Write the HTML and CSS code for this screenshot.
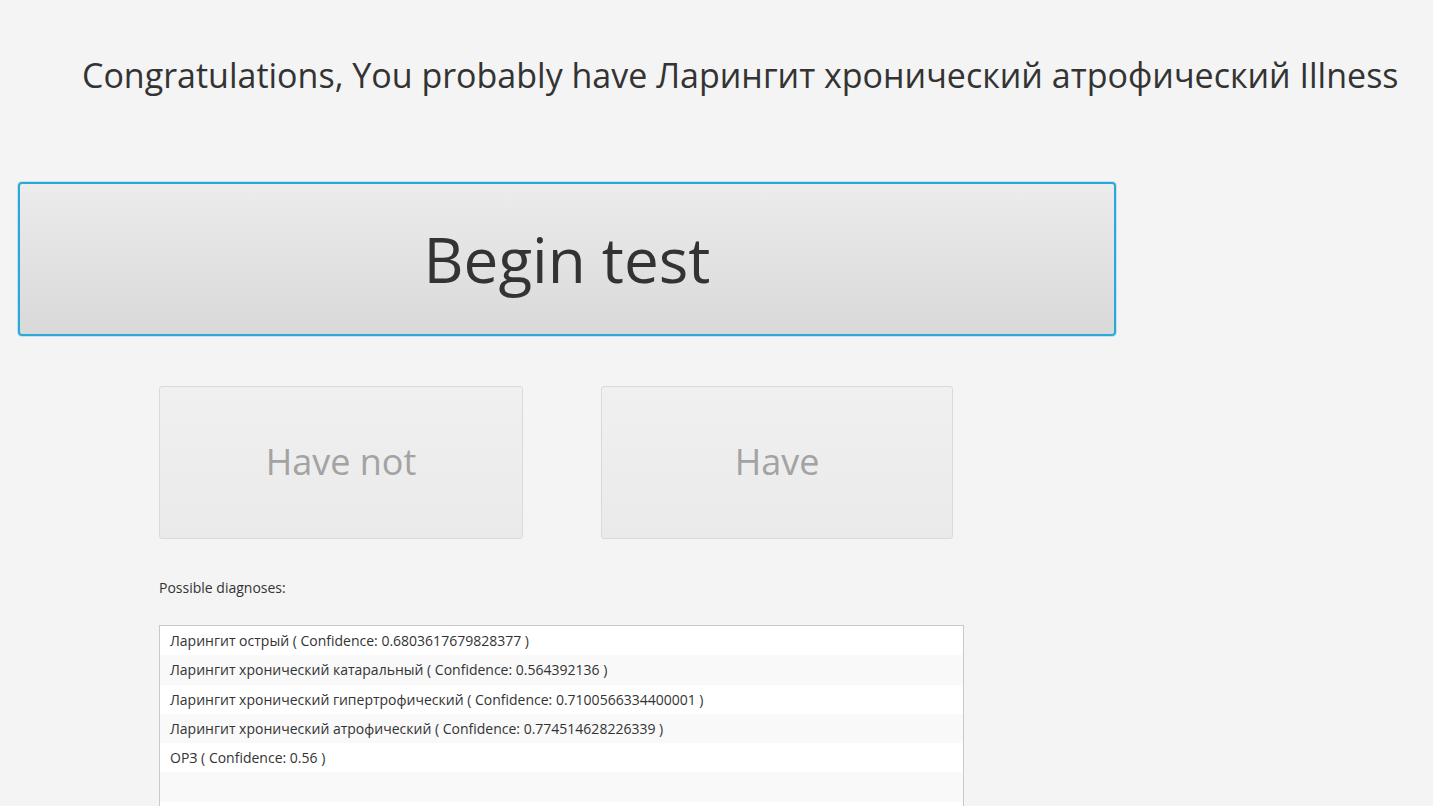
FILE: index.html
```html
<!DOCTYPE html>
<html>
<head>
<meta charset="utf-8">
<link rel="stylesheet" href="styles.css">
</head>
<body>
<div class="app">
  <h1 class="title">Congratulations, You probably have Ларингит хронический атрофический Illness</h1>
  <button class="begin">Begin test</button>
  <div class="answers">
    <button class="answer not" disabled>Have not</button>
    <button class="answer yes" disabled>Have</button>
  </div>
  <div class="label">Possible diagnoses:</div>
  <ul class="list">
    <li>Ларингит острый ( Confidence: 0.6803617679828377 )</li>
    <li>Ларингит хронический катаральный ( Confidence: 0.564392136 )</li>
    <li>Ларингит хронический гипертрофический ( Confidence: 0.7100566334400001 )</li>
    <li>Ларингит хронический атрофический ( Confidence: 0.774514628226339 )</li>
    <li>ОРЗ ( Confidence: 0.56 )</li>
    <li></li>
    <li></li>
  </ul>
</div>
</body>
</html>
```

FILE: styles.css
```css
html, body {
  margin: 0;
  padding: 0;
  background: #f4f4f4;
  overflow: hidden;
}
body {
  width: 1433px;
  height: 806px;
  font-family: "Open Sans", "Noto Sans", sans-serif;
  color: #333333;
}
.app {
  display: flex;
  flex-direction: column;
  align-items: flex-start;
}
.title {
  margin: 50px 0 0 82px;
  font-weight: 400;
  font-size: 34px;
  line-height: 50px;
  color: #333;
  white-space: nowrap;
}
.begin {
  margin: 82px 0 0 18px;
  width: 1098px;
  height: 154px;
  border: 2px solid #2aa8d8;
  border-radius: 4px;
  box-shadow: 0 0 0 1px rgba(40,170,220,0.25);
  background: linear-gradient(#ececec, #d9d9d9);
  font-family: inherit;
  font-size: 62px;
  color: #333;
  padding: 0;
}
.answers {
  display: flex;
  gap: 78px;
  margin: 50px 0 0 159px;
}
.answer {
  height: 153px;
  border: 1px solid #dadada;
  border-radius: 3px;
  background: linear-gradient(#f0f0f0, #eaeaea);
  font-family: inherit;
  font-size: 36px;
  color: #a3a3a3;
  padding: 0 0 2px 0;
}
.answer.not { width: 364px; }
.answer.yes { width: 352px; }
.label {
  margin: 39px 0 0 159px;
  font-size: 14px;
  line-height: 20px;
  color: #333;
}
.list {
  list-style: none;
  margin: 27px 0 0 159px;
  padding: 0;
  width: 803px;
  border: 1px solid #c9c9c9;
  border-bottom: none;
  background: #fff;
}
.list li {
  height: 29.3px;
  line-height: 29px;
  padding-left: 10px;
  font-size: 14px;
  color: #333;
  white-space: nowrap;
}
.list li:nth-child(even) {
  background: #f9f9f9;
}
```
